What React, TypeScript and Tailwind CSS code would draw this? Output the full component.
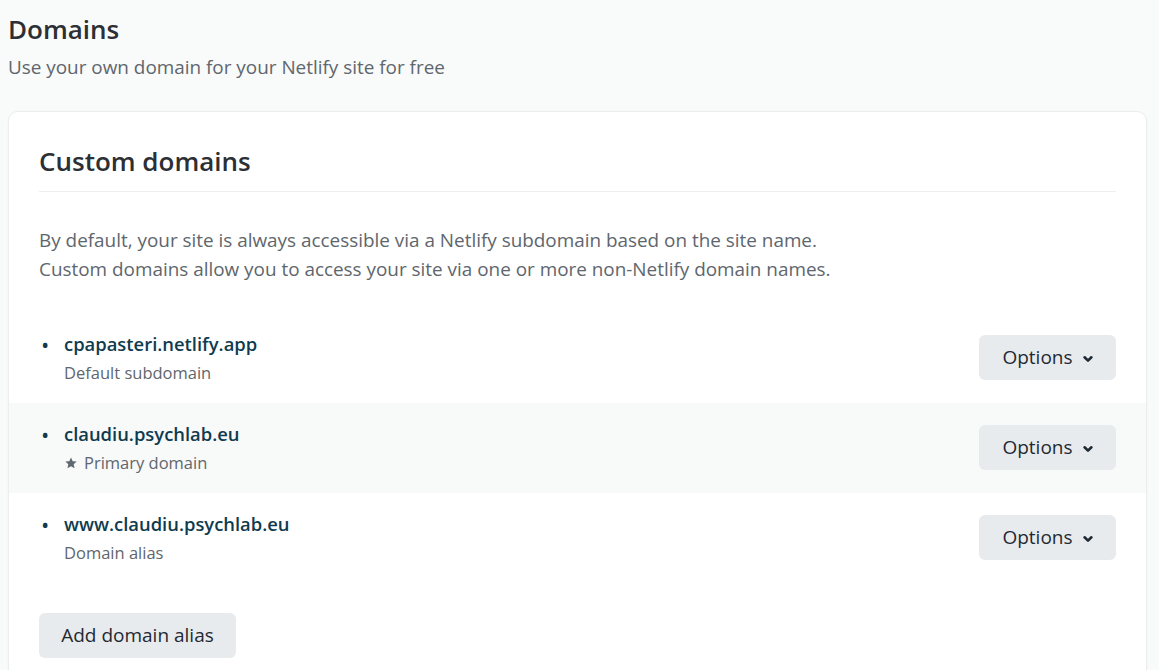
import React from 'react'

const domains = [
  { name: 'cpapasteri.netlify.app', label: 'Default subdomain', primary: false },
  { name: 'claudiu.psychlab.eu', label: 'Primary domain', primary: true },
  { name: 'www.claudiu.psychlab.eu', label: 'Domain alias', primary: false },
]

const Chevron: React.FC = () => (
  <svg viewBox="0 0 10 10" className="h-[10px] w-[10px] ml-[10px] mt-[3px]" fill="none">
    <path d="M1.6 3.3 5 6.6 8.4 3.3" stroke="#1f2933" strokeWidth="2.6" strokeLinecap="round" strokeLinejoin="round" />
  </svg>
)

const Star: React.FC = () => (
  <svg viewBox="0 0 24 24" className="h-[14px] w-[14px] mr-[6px]" fill="#5f6770">
    <path d="M12 2.5l2.9 6.3 6.8.7-5.1 4.6 1.5 6.8L12 17.4l-6.1 3.5 1.5-6.8-5.1-4.6 6.8-.7z" />
  </svg>
)

const App: React.FC = () => {
  return (
    <div className="min-h-screen bg-[#f9fafa] px-2 pt-[12px] text-[#2e3338]" style={{ fontFamily: '"Open Sans", "Noto Sans", sans-serif' }}>
      <h1 className="text-[26px] leading-[34px] font-semibold text-[#2c2f33]">Domains</h1>
      <p className="mt-[9px] text-[18.9px] leading-[24px] text-[#60666d]">
        Use your own domain for your Netlify site for free
      </p>
      <div className="mt-[32px] mr-[4px] rounded-[10px] border border-[#eceeee] bg-white shadow-[0_1px_3px_rgba(0,0,0,0.04)] pt-[29px]">
        <div className="px-[30px]">
          <h2 className="text-[26px] leading-[40px] font-semibold text-[#2c2f33] pb-[10px] border-b border-[#eef0f0]">
            Custom domains
          </h2>
          <p className="mt-[34px] text-[18.9px] leading-[29px] text-[#60666d]">
            By default, your site is always accessible via a Netlify subdomain based on the site name.
            <br />
            Custom domains allow you to access your site via one or more non-Netlify domain names.
          </p>
        </div>
        <ul className="mt-[29px]">
          {domains.map((d) => (
            <li
              key={d.name}
              className={`flex h-[90px] items-center justify-between px-[30px] ${d.primary ? 'bg-[#f8f9f9]' : ''}`}
            >
              <div className="flex -mt-[1px]">
                <span className="w-[25px] pl-[2px] text-[22px] leading-[30px] text-[#0f3b4f]">•</span>
                <div className="flex flex-col">
                  <span className="text-[18.4px] leading-[30px] font-semibold text-[#0f3b4f]">{d.name}</span>
                  <span className="flex items-center text-[16.5px] leading-[27px] text-[#60666d]">
                    {d.primary && <Star />}
                    {d.label}
                  </span>
                </div>
              </div>
              <button className="-mt-[1px] flex h-[45px] w-[137px] items-center justify-center rounded-[6px] bg-[#e8ebed] text-[19px] font-medium text-[#1f2933]">
                Options
                <Chevron />
              </button>
            </li>
          ))}
        </ul>
        <div className="px-[30px] pt-[30px] pb-[30px]">
          <button className="h-[45px] w-[197px] rounded-[6px] bg-[#e8ebed] text-[19px] font-medium text-[#1f2933]">
            Add domain alias
          </button>
        </div>
      </div>
    </div>
  )
}

export default App
